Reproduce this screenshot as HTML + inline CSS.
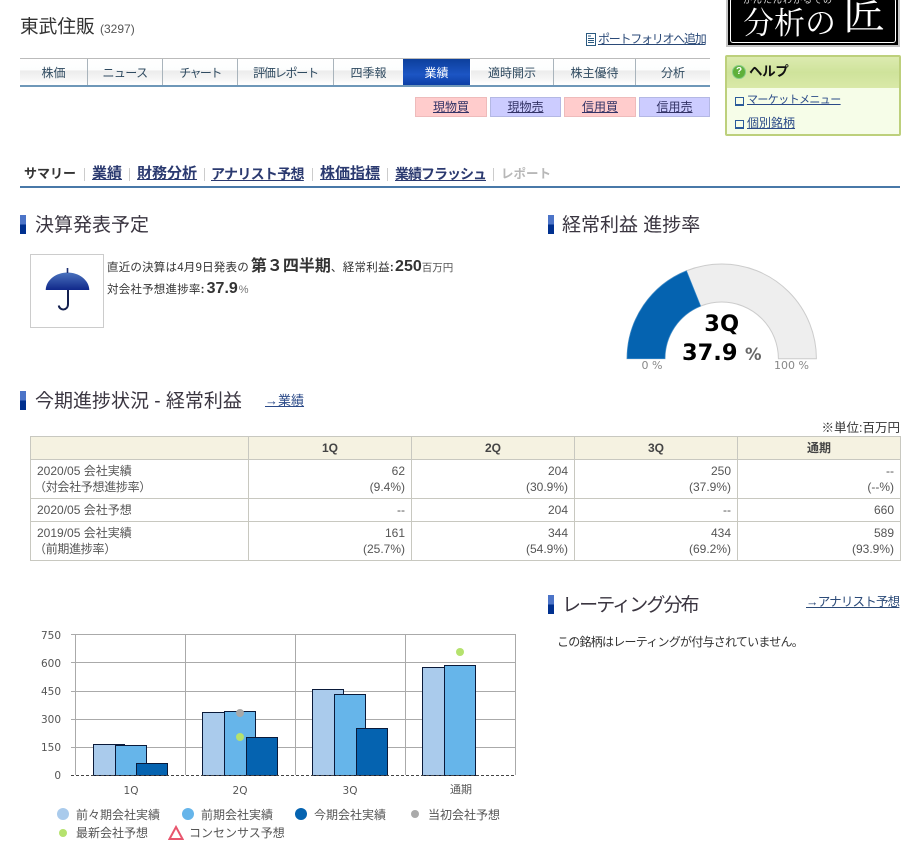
<!DOCTYPE html>
<html lang="ja"><head><meta charset="utf-8"><title>東武住販</title>
<style>
html,body{margin:0;padding:0;background:#fff}
body{width:916px;height:843px;position:relative;overflow:hidden;font-family:"Liberation Sans","Noto Sans CJK JP",sans-serif;color:#333;font-size:12px}
.t{position:absolute;white-space:nowrap;line-height:16px}
a{color:#224;text-decoration:underline}
.b{position:absolute}
.tab{position:absolute;top:59px;height:26px;background:linear-gradient(#fff 0,#fcfdfd 11px,#ececec 12px,#f6f6f6 20px,#fff 26px);border-right:1px solid #a9b4bc;text-align:center;line-height:28px;font-size:12px;color:#2f4a60}
.btn{position:absolute;top:97px;height:18px;line-height:18px;text-align:center;font-size:12px;border:1px solid #ddb}
.btn a{color:#336}
.r{background:#fcc;border-color:#eebbbb}.v{background:#ccf;border-color:#b4b8e4}
.sub{position:absolute;top:164px;font-size:15px;font-weight:bold;line-height:20px;white-space:nowrap}
.sub a{color:#2b3a70}
.sep{position:absolute;top:168px;width:1px;height:13px;background:#ccc}
.mk{position:absolute;width:6px;height:19px;background:linear-gradient(#4c74c8 0,#4c74c8 9px,#00308f 10px,#00308f 100%)}
.h{position:absolute;font-size:19px;line-height:24px;color:#3a3540;white-space:nowrap}
table{position:absolute;left:30px;top:436px;border-collapse:collapse;table-layout:fixed;width:870px;font-size:12px;color:#555}
td,th{border:1px solid #c8c8c0;padding:0 6px;line-height:16px;overflow:hidden}
th{background:#f5f2e1;height:22px;font-weight:bold;text-align:center;padding:0;color:#444}
td.n{text-align:right}
td{white-space:nowrap}
.pr{margin-left:-3px;letter-spacing:-.3px}
.lg{position:absolute;font-size:12px;line-height:16px;color:#555;white-space:nowrap}
.d{position:absolute;border-radius:50%}
</style></head><body>

<div class="t" style="left:20px;top:14px;font-size:18.7px;line-height:26px;color:#333">東武住販</div>
<div class="t" style="left:100px;top:21px;font-size:12px;color:#555">(3297)</div>

<svg class="b" style="left:586px;top:33px" width="11" height="13" viewBox="0 0 11 13"><rect x=".5" y=".5" width="9" height="12" fill="#fff" stroke="#2b5a80"/><path d="M2 3h3M2 5.500h6M2 7.500h6M2 9.500h6" stroke="#2b5a80"/></svg>
<div class="t" style="left:598px;top:31px;font-size:12px;letter-spacing:-1.25px"><a style="color:#2b4a78">ポートフォリオへ追加</a></div>

<!-- tabs -->
<div class="b" style="left:20px;top:58px;width:690px;height:1px;background:#bbb"></div>
<div class="tab" style="left:20px;width:67px">株価</div>
<div class="tab" style="left:88px;width:74px;letter-spacing:-.6px">ニュース</div>
<div class="tab" style="left:163px;width:74px;letter-spacing:-1.6px">チャート</div>
<div class="tab" style="left:238px;width:95px;letter-spacing:-1.2px">評価レポート</div>
<div class="tab" style="left:334px;width:69px">四季報</div>
<div class="tab" style="left:403px;top:59px;width:67px;border:0;background:linear-gradient(#0c3f9c,#1c55c4 60%,#0d3fa5);color:#fff">業績</div>
<div class="tab" style="left:471px;width:82px">適時開示</div>
<div class="tab" style="left:554px;width:81px">株主優待</div>
<div class="tab" style="left:636px;width:74px;border-right:0">分析</div>
<div class="b" style="left:20px;top:85px;width:690px;height:2px;background:#6e97b8"></div>

<div class="btn r" style="left:415px;width:70px"><a>現物買</a></div>
<div class="btn v" style="left:490px;width:69px"><a>現物売</a></div>
<div class="btn r" style="left:564px;width:70px"><a>信用買</a></div>
<div class="btn v" style="left:639px;width:69px"><a>信用売</a></div>

<!-- banner -->
<div class="b" style="left:726px;top:-6px;width:170px;height:49px;background:#000;border:2px solid #c4c4c4;overflow:hidden">
 <div class="b" style="left:2px;top:2px;width:164px;height:43px;border:1px solid #fff;border-radius:3px"></div>
 <div class="t" style="left:15px;top:-1px;font-size:9px;line-height:10px;color:#ddd;letter-spacing:1px">かんたんわかるでの</div>
 <div class="t" style="left:15px;top:10px;font-family:'Liberation Serif','Noto Serif CJK SC',serif;font-size:31px;line-height:36px;color:#fff">分析の</div>
 <div class="t" style="left:115px;top:-3px;font-family:'Liberation Serif','Noto Serif CJK SC',serif;font-size:42px;line-height:46px;color:#fff">匠</div>
</div>

<!-- help -->
<div class="b" style="left:725px;top:55px;width:172px;height:77px;border:2px solid #bdd07c;border-radius:2px;background:#f6fde8">
 <div class="b" style="left:0;top:0;width:172px;height:31px;background:linear-gradient(#dcebb0,#cfe39b 50%,#d9e9a8)"></div>
 <div class="d" style="left:5px;top:8px;width:14px;height:14px;background:#5fb03a;border:1px solid #8c8;box-sizing:border-box;color:#fff;font-size:10px;line-height:12px;text-align:center;font-weight:bold">?</div>
 <div class="t" style="left:22px;top:6px;font-size:13.500px;font-weight:bold;line-height:18px;color:#111;letter-spacing:-.4px">ヘルプ</div>
 <div class="b" style="left:8px;top:40px;width:7px;height:6px;border:1px solid #2b5a9a;border-bottom-width:2px"></div>
 <div class="t" style="left:20px;top:35px;font-size:11px;letter-spacing:-.6px"><a style="color:#2b4a88">マーケットメニュー</a></div>
 <div class="b" style="left:8px;top:63px;width:7px;height:6px;border:1px solid #2b5a9a;border-bottom-width:2px"></div>
 <div class="t" style="left:20px;top:58px;font-size:12px"><a style="color:#2b4a88">個別銘柄</a></div>
</div>

<!-- sub nav -->
<div class="sub" style="left:24px;font-size:13px;color:#333">サマリー</div>
<div class="sep" style="left:84px"></div>
<div class="sub" style="left:92px"><a>業績</a></div>
<div class="sep" style="left:129px"></div>
<div class="sub" style="left:137px"><a>財務分析</a></div>
<div class="sep" style="left:204px"></div>
<div class="sub" style="left:211px;font-size:14px"><a style="letter-spacing:-.7px">アナリスト予想</a></div>
<div class="sep" style="left:312px"></div>
<div class="sub" style="left:320px"><a>株価指標</a></div>
<div class="sep" style="left:387px"></div>
<div class="sub" style="left:395px;font-size:14px"><a style="letter-spacing:-1px">業績フラッシュ</a></div>
<div class="sep" style="left:493px"></div>
<div class="sub" style="left:501px;color:#b8b8b8;font-size:12.500px">レポート</div>
<div class="b" style="left:20px;top:186px;width:880px;height:2px;background:#4878a8"></div>

<!-- section 1 -->
<div class="mk" style="left:20px;top:215px"></div>
<div class="h" style="left:35px;top:214px">決算発表予定</div>
<div class="b" style="left:30px;top:254px;width:72px;height:72px;border:1px solid #ccc"></div>
<svg class="b" style="left:30px;top:254px" width="74" height="74" viewBox="0 0 74 74">
<defs><linearGradient id="u" x1="0" y1="0" x2="0" y2="1"><stop offset="0" stop-color="#4a72bd"/><stop offset="1" stop-color="#10288a"/></linearGradient></defs>
<path d="M15.700 36C16 26 26 18.500 37.500 18.500S59 26 59.300 36Z" fill="url(#u)"/>
<path d="M37.500 14V19" stroke="#1c2c70" stroke-width="1.600"/>
<path d="M38 36V50C38 57 29.500 57 28.800 51.500" fill="none" stroke="#14204f" stroke-width="2"/>
</svg>

<div class="t" style="left:107px;top:259px;font-size:11.500px;line-height:16px;letter-spacing:.2px;color:#333">直近の決算は4月9日発表の<b style="font-size:16px;letter-spacing:0;margin-left:2px">第３四半期</b><span style="font-size:11.500px;letter-spacing:.3px">、経常利益<b>:</b></span><b style="font-size:16px;letter-spacing:0;margin-left:1px">250</b><span style="font-size:10.500px;letter-spacing:0;color:#555">百万円</span></div>
<div class="t" style="left:107px;top:281px;font-size:11.500px;line-height:16px;letter-spacing:.2px;color:#333">対会社予想進捗率<b>:</b><b style="font-size:16px;letter-spacing:0;margin-left:2px">37.9</b><span style="font-size:11px;color:#777;margin-left:1px">%</span></div>

<div class="mk" style="left:548px;top:215px"></div>
<div class="h" style="left:562px;top:214px">経常利益 進捗率</div>

<svg class="b" style="left:620px;top:255px" width="210" height="120" viewBox="620 255 210 120">
<path d="M627 358.700A94.700 94.700 0 0 1 816.400 358.700H778.400A56.700 56.700 0 0 0 665 358.700Z" fill="#eee" stroke="#ccc"/>
<path d="M627 358.700A94.700 94.700 0 0 1 686.500 270.800L700.700 306.100A56.700 56.700 0 0 0 665 358.700Z" fill="#0563b0" stroke="#3b8ccc" stroke-width=".6"/>
<text x="721.700" y="331" text-anchor="middle" font-family="DejaVu Sans" font-weight="bold" font-size="22.500" fill="#000">3Q</text>
<text x="682" y="360" font-family="DejaVu Sans" font-weight="bold" font-size="22.500" fill="#000">37.9</text>
<text x="745" y="360" font-family="DejaVu Sans" font-weight="bold" font-size="16.500" fill="#666">%</text>
<text x="641.500" y="369" font-family="DejaVu Sans" font-size="11" fill="#888">0 %</text>
<text x="774" y="369" font-family="DejaVu Sans" font-size="11" fill="#888">100 %</text>
</svg>

<!-- section 2 -->
<div class="mk" style="left:20px;top:391px"></div>
<div class="h" style="left:35px;top:390px">今期進捗状況 - 経常利益</div>
<div class="t" style="left:265px;top:393px;font-size:13px"><a style="color:#2b4a88">→業績</a></div>
<div class="t" style="right:16px;top:420px;font-size:12.500px;color:#333">※単位:百万円</div>

<table>
<colgroup><col style="width:218px"><col style="width:163px"><col style="width:163px"><col style="width:163px"><col style="width:163px"></colgroup>
<tr><th></th><th>1Q</th><th>2Q</th><th>3Q</th><th>通期</th></tr>
<tr style="height:39px"><td>2020/05 会社実績<br><span class="pr">（対会社予想進捗率）</span></td><td class="n">62<br>(9.4%)</td><td class="n">204<br>(30.9%)</td><td class="n">250<br>(37.9%)</td><td class="n">--<br>(--%)</td></tr>
<tr style="height:23px"><td>2020/05 会社予想</td><td class="n">--</td><td class="n">204</td><td class="n">--</td><td class="n">660</td></tr>
<tr style="height:39px"><td>2019/05 会社実績<br><span class="pr">（前期進捗率）</span></td><td class="n">161<br>(25.7%)</td><td class="n">344<br>(54.9%)</td><td class="n">434<br>(69.2%)</td><td class="n">589<br>(93.9%)</td></tr>
</table>

<!-- rating -->
<div class="mk" style="left:548px;top:595px"></div>
<div class="h" style="left:562px;top:594px;letter-spacing:-1.9px">レーティング分布</div>
<div class="t" style="left:806px;top:594px;font-size:12.500px;letter-spacing:-.8px"><a style="color:#2b4a78">→アナリスト予想</a></div>
<div class="t" style="left:557px;top:634px;font-size:12px;letter-spacing:-.75px;color:#333">この銘柄はレーティングが付与されていません。</div>

<!-- chart -->
<svg class="b" style="left:0;top:620px" width="530" height="175" viewBox="0 620 530 175">
<g stroke="#aaa" stroke-width="1" fill="none" shape-rendering="crispEdges">
<path d="M71 634.500H515.500M71 662.500H515.500M71 691.500H515.500M71 719.500H515.500M71 747.500H515.500"/>
<path d="M75.500 634V775M185.500 634V775M295.500 634V775M405.500 634V775M515.500 634V775"/>
</g>
<g stroke="#0a1a3a" stroke-width="1" shape-rendering="crispEdges">
<rect x="93.500" y="744.500" width="31" height="31" fill="#aacbec"/>
<rect x="115.500" y="745.500" width="31" height="30" fill="#66b5ea"/>
<rect x="136.500" y="763.500" width="31" height="12" fill="#0563b0"/>
<rect x="202.500" y="712.500" width="31" height="63" fill="#aacbec"/>
<rect x="224.500" y="711.500" width="31" height="64" fill="#66b5ea"/>
<rect x="246.500" y="737.500" width="31" height="38" fill="#0563b0"/>
<rect x="312.500" y="689.500" width="31" height="86" fill="#aacbec"/>
<rect x="334.500" y="694.500" width="31" height="81" fill="#66b5ea"/>
<rect x="356.500" y="728.500" width="31" height="47" fill="#0563b0"/>
<rect x="422.500" y="667.500" width="31" height="108" fill="#aacbec"/>
<rect x="444.500" y="665.500" width="31" height="110" fill="#66b5ea"/>
</g>
<path d="M71 775.500H515.500" stroke="#444" stroke-width="1" stroke-dasharray="3 2" shape-rendering="crispEdges"/>
<circle cx="240" cy="713" r="4" fill="#a8a8a8"/>
<circle cx="240" cy="737" r="4" fill="#b5e26e"/>
<circle cx="460" cy="652" r="4" fill="#b5e26e"/>
<g font-family="DejaVu Sans" font-size="10.500" fill="#555">
<text x="61" y="639" text-anchor="end">750</text>
<text x="61" y="667" text-anchor="end">600</text>
<text x="61" y="695" text-anchor="end">450</text>
<text x="61" y="723" text-anchor="end">300</text>
<text x="61" y="751" text-anchor="end">150</text>
<text x="61" y="779" text-anchor="end">0</text>
<text x="131" y="794" text-anchor="middle">1Q</text>
<text x="240" y="794" text-anchor="middle">2Q</text>
<text x="350" y="794" text-anchor="middle">3Q</text>
</g>
</svg>
<div class="t" style="left:450px;top:782px;font-size:11px;line-height:16px;color:#555">通期</div>

<div class="d" style="left:57px;top:808px;width:12px;height:12px;background:#aacbec"></div>
<div class="lg" style="left:76px;top:807px">前々期会社実績</div>
<div class="d" style="left:182px;top:808px;width:12px;height:12px;background:#66b5ea"></div>
<div class="lg" style="left:201px;top:807px">前期会社実績</div>
<div class="d" style="left:295px;top:808px;width:12px;height:12px;background:#0563b0"></div>
<div class="lg" style="left:314px;top:807px">今期会社実績</div>
<div class="d" style="left:411px;top:810px;width:8px;height:8px;background:#aaa"></div>
<div class="lg" style="left:428px;top:807px">当初会社予想</div>
<div class="d" style="left:59px;top:829px;width:8px;height:8px;background:#b5e26e"></div>
<div class="lg" style="left:76px;top:825px">最新会社予想</div>
<svg class="b" style="left:168px;top:825px" width="16" height="16" viewBox="0 0 16 16"><path d="M8 2L14.500 14H1.500Z" fill="none" stroke="#e8566e" stroke-width="2"/></svg>
<div class="lg" style="left:189px;top:825px">コンセンサス予想</div>

</body></html>
